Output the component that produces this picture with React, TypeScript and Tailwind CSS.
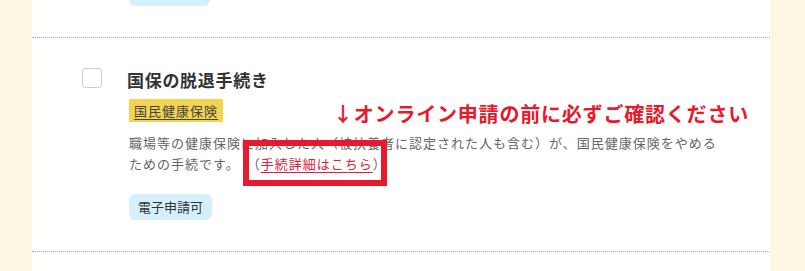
import React from 'react'

const jp = { fontFamily: "'Noto Sans CJK JP', 'Noto Sans', sans-serif" }

export default function App() {
  return (
    <div className="flex w-full h-[271px] overflow-hidden bg-[#fef8e2]" style={jp}>
      <div className="w-[32px] shrink-0" />
      <div className="w-[738px] shrink-0 bg-white">
        {/* previous item (tail) */}
        <div className="pl-[97px] pb-[31px] border-b border-dotted border-[#a8a8a8]">
          <div className="-mt-[20px] w-[81px] h-[26px] rounded-[6px] bg-[#d6f0fb]" />
        </div>

        {/* item */}
        <div className="relative flex pl-[50px] pt-[30px] pb-[31px] border-b border-dotted border-[#a8a8a8]">
          <div className="w-[20px] h-[20px] shrink-0 rounded-[3px] border border-[#c9cdd3] bg-white" />
          <div className="ml-[27px] flex flex-col items-start">
            <h3 className="h-[24px] leading-[24px] text-[17px] font-bold tracking-[0.7px] text-[#333] -ml-[2px]">
              国保の脱退手続き
            </h3>
            <span className="mt-[7px] h-[23px] leading-[23px] px-[5px] bg-[#f3d34f] text-[13px] tracking-[1px] text-[#444] underline underline-offset-[3px]">
              国民健康保険
            </span>
            <p className="mt-[10px] w-[600px] text-[13px] leading-[21px] tracking-[1px] text-[#666]">
              職場等の健康保険に加入した人（被扶養者に認定された人も含む）が、国民健康保険をやめるための手続です。{' '}
              <span className="ml-[3px]">（</span><a className="text-[#e0203a] underline underline-offset-[3px] decoration-[#e0203a]">手続詳細はこちら</a>）
            </p>
            <span className="mt-[20px] h-[26px] leading-[26px] px-[9px] rounded-[6px] bg-[#d6f0fb] text-[13px] text-[#333]">
              電子申請可
            </span>
          </div>

          {/* annotation overlays */}
          <div className="absolute left-[301px] top-[62px] text-[20px] leading-[28px] font-bold tracking-[0.8px] text-[#e8192c] whitespace-nowrap">
            ↓オンライン申請の前に必ずご確認ください
          </div>
          <div className="absolute left-[211px] top-[102px] w-[144px] h-[46px] border-[6px] border-[#e8192c]" />
        </div>
      </div>
    </div>
  )
}
